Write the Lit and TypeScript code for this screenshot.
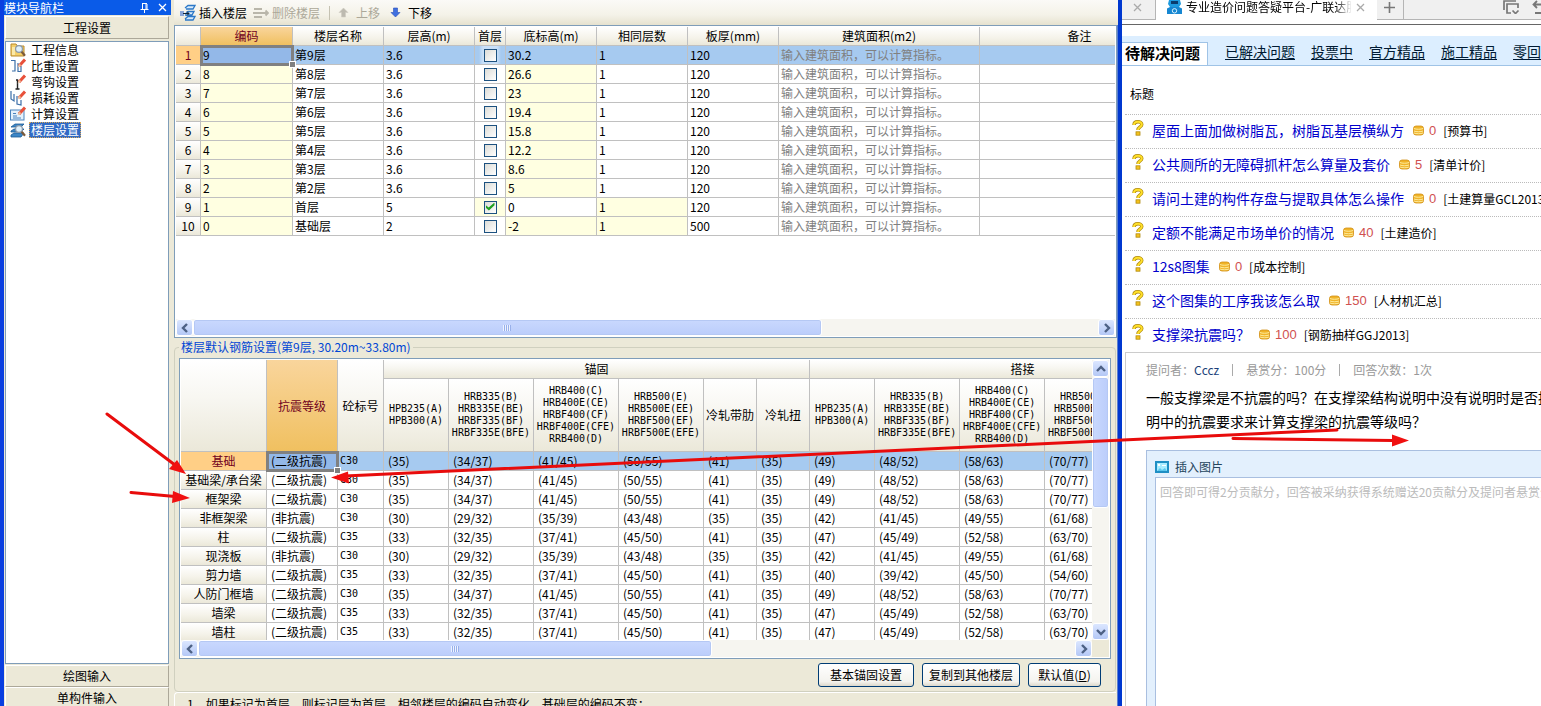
import { LitElement, html, css, svg, nothing } from "lit";
import { customElement } from "lit/decorators.js";
import { classMap } from "lit/directives/class-map.js";

const HINT = "输入建筑面积，可以计算指标。";

interface Floor { code: string; name: string; h: string; first: boolean; base: string; thick: string; }

const FLOORS: Floor[] = [
  { code: "9", name: "第9层", h: "3.6", first: false, base: "30.2", thick: "120" },
  { code: "8", name: "第8层", h: "3.6", first: false, base: "26.6", thick: "120" },
  { code: "7", name: "第7层", h: "3.6", first: false, base: "23", thick: "120" },
  { code: "6", name: "第6层", h: "3.6", first: false, base: "19.4", thick: "120" },
  { code: "5", name: "第5层", h: "3.6", first: false, base: "15.8", thick: "120" },
  { code: "4", name: "第4层", h: "3.6", first: false, base: "12.2", thick: "120" },
  { code: "3", name: "第3层", h: "3.6", first: false, base: "8.6", thick: "120" },
  { code: "2", name: "第2层", h: "3.6", first: false, base: "5", thick: "120" },
  { code: "1", name: "首层", h: "5", first: true, base: "0", thick: "120" },
  { code: "0", name: "基础层", h: "2", first: false, base: "-2", thick: "500" },
];

const FLOOR_COLS = [25, 92, 91, 91, 31, 91, 91, 91, 201, 200];
const FLOOR_HEADS = ["编码", "楼层名称", "层高(m)", "首层", "底标高(m)", "相同层数", "板厚(mm)", "建筑面积(m2)", "备注"];

const G30 = ["(35)", "(34/37)", "(41/45)", "(50/55)", "(41)", "(35)", "(49)", "(48/52)", "(58/63)", "(70/77)"];
const GN = ["(30)", "(29/32)", "(35/39)", "(43/48)", "(35)", "(35)", "(42)", "(41/45)", "(49/55)", "(61/68)"];
const G35 = ["(33)", "(32/35)", "(37/41)", "(45/50)", "(41)", "(35)", "(47)", "(45/49)", "(52/58)", "(63/70)"];
const GW = ["(33)", "(32/35)", "(37/41)", "(45/50)", "(41)", "(35)", "(40)", "(39/42)", "(45/50)", "(54/60)"];

const REBAR: [string, string, string, string[]][] = [
  ["基础", "(二级抗震)", "C30", G30],
  ["基础梁/承台梁", "(二级抗震)", "C30", G30],
  ["框架梁", "(二级抗震)", "C30", G30],
  ["非框架梁", "(非抗震)", "C30", GN],
  ["柱", "(二级抗震)", "C35", G35],
  ["现浇板", "(非抗震)", "C30", GN],
  ["剪力墙", "(二级抗震)", "C35", GW],
  ["人防门框墙", "(二级抗震)", "C30", G30],
  ["墙梁", "(二级抗震)", "C35", G35],
  ["墙柱", "(二级抗震)", "C35", G35],
];

const REBAR_COLS = [86, 71, 46, 65, 85, 85, 85, 53, 53, 65, 85, 85, 85, 53, 53];
const BAR_KINDS: string[][] = [
  ["HPB235(A)", "HPB300(A)"],
  ["HRB335(B)", "HRB335E(BE)", "HRBF335(BF)", "HRBF335E(BFE)"],
  ["HRB400(C)", "HRB400E(CE)", "HRBF400(CF)", "HRBF400E(CFE)", "RRB400(D)"],
  ["HRB500(E)", "HRB500E(EE)", "HRBF500(EF)", "HRBF500E(EFE)"],
];
const KINDS: string[][] = [...BAR_KINDS, ["冷轧带肋"], ["冷轧扭"], ...BAR_KINDS, [], []];

const QUESTIONS: [string, string, string][] = [
  ["屋面上面加做树脂瓦，树脂瓦基层横纵方", "0", "[预算书]"],
  ["公共厕所的无障碍抓杆怎么算量及套价", "5", "[清单计价]"],
  ["请问土建的构件存盘与提取具体怎么操作", "0", "[土建算量GCL2013]"],
  ["定额不能满足市场单价的情况", "40", "[土建造价]"],
  ["12s8图集", "0", "[成本控制]"],
  ["这个图集的工序我该怎么取", "150", "[人材机汇总]"],
  ["支撑梁抗震吗？", "100", "[钢筋抽样GGJ2013]"],
];

const pencil = svg`<path d="M15 1.5 9 8" stroke="#e8503a" stroke-width="3"/><path d="M9.8 5.6 7.4 9.6l3.6-2.2z" fill="#e9c9a0"/>`;
const glass = svg`<circle cx="9" cy="7" r="3.4" fill="#dff0fb" stroke="#8a98a8" stroke-width="1.2"/><path d="m11.6 9.8 3.4 4" stroke="#7b5a3a" stroke-width="2.2"/>`;

const NAV: [string, unknown][] = [
  ["工程信息", svg`<path d="M1 2h5l1.5 2H14v10H1z" fill="#f4cf6a" stroke="#b98a2c"/><path d="M2 5h3v8H2z" fill="#fbe9a8"/>${glass}`],
  ["比重设置", svg`<path d="M1 2.5h4v10.500H2M8 5v8.500h3V8" fill="none" stroke="#3b6ea8" stroke-width="1.2"/>${pencil}`],
  ["弯钩设置", svg`<path d="M5.500 15h4M7.500 15V6H6" fill="none" stroke="#222" stroke-width="1.400"/>${pencil}`],
  ["损耗设置", svg`<path d="M1 1v8l3 2V4M7 6v8l4 1v-5" fill="none" stroke="#3b6ea8" stroke-width="1.200"/>${pencil}`],
  ["计算设置", svg`<rect x=".5" y="4" width="13.500" height="10" fill="#e4f1fb" stroke="#4a83bd"/><path d="M3 7.500h3M3 10h4M3 12h8" stroke="#4a83bd"/>${pencil}`],
  ["楼层设置", svg`<path d="m1 5 4-3h9l-3 3zM1 9l3-2h10l-3 3H1zM1 13l3-2h10l-3 4H1z" fill="#3d86c6" stroke="#1c5a94" stroke-width=".8"/>${glass}`],
];

@customElement("scroll-bar")
export class ScrollBar extends LitElement {
  static properties = { vertical: { type: Boolean, reflect: true }, thumb: { type: Number }, rest: { type: Number } };
  declare vertical: boolean;
  declare thumb: number;
  declare rest: number;

  static styles = css`
    :host { display: flex; width: 100%; height: 17px; background: #f6f5f0; }
    :host([vertical]) { flex-direction: column; width: 17px; height: 100%; }
    .arrow { flex: 0 0 17px; height: 17px; width: 17px; padding: 0; border: 1px solid #fff; border-radius: 3px; background: linear-gradient(#dbe6ff, #b4c8f6); display: grid; place-items: center; }
    .track { flex: 1; display: flex; min-width: 0; min-height: 0; }
    :host([vertical]) .track { flex-direction: column; }
    .thumb { border: 1px solid #fff; border-radius: 3px; box-shadow: inset 0 0 0 1px #b5c8f4; background: linear-gradient(#c9d8fe, #bbcdfb); display: grid; place-items: center; }
    .grip { width: 8px; height: 6px; background: repeating-linear-gradient(90deg, #eef3ff 0 1px, #98b0ea 1px 2px); }
    :host([vertical]) .thumb { background: linear-gradient(90deg, #c9d8fe, #bbcdfb); }
    :host([vertical]) .grip { display: none; }
    svg { display: block; }
  `;

  render() {
    const a = this.vertical ? "m1 7 4-4 4 4" : "M7 1 3 5l4 4";
    const b = this.vertical ? "m1 3 4 4 4-4" : "m3 1 4 4-4 4";
    const arrow = (d: string) => html`<svg width="10" height="10" viewBox="0 0 10 10"><path d=${d} fill="none" stroke="#4d6185" stroke-width="2.400"/></svg>`;
    return html`
      <button class="arrow" aria-label="向前滚动">${arrow(a)}</button>
      <div class="track">
        <div class="thumb" style="flex:${this.thumb} 1 0"><div class="grip"></div></div>
        <div style="flex:${this.rest} 1 0"></div>
      </div>
      <button class="arrow" aria-label="向后滚动">${arrow(b)}</button>`;
  }
}

@customElement("app-root")
export class AppRoot extends LitElement {
  static styles = css`
    :host {
      display: block; position: relative; height: 100vh; overflow: hidden; color: #000; background: #fff;
      font: 12px/16px "Noto Sans CJK SC", "Liberation Sans", sans-serif;
    }
    * { box-sizing: border-box; }
    button { font: inherit; color: inherit; margin: 0; padding: 0; cursor: default; }
    svg { display: block; flex: none; }
    .desktop { display: grid; grid-template-columns: minmax(0, 1122fr) minmax(0, 419fr); height: 100%; }
    .app { display: grid; grid-template-columns: 170px minmax(0, 1fr); background: #ece9d8; border-left: 4px solid #0a3fe0; border-right: 4px solid #0038d0; box-shadow: inset -1px 0 #5c7fd0; overflow: hidden; }

    /* navigation column */
    .side { display: flex; flex-direction: column; min-height: 0; padding-right: 4px; gap: 1px; }
    .cap { display: flex; align-items: center; height: 15px; margin-right: -1px; color: #fff; background: #0a5be8; }
    .cap span { flex: 1; }
    .cap button { border: 0; background: none; width: 18px; height: 15px; display: grid; place-items: center; }
    .bar { flex: none; height: 22px; margin: 0 1px; border: 1px solid #fff; border-bottom-color: #aca899; border-right-color: #aca899; background: #ece9d8; }
    .bar.top { height: 23px; margin-bottom: 1px; }
    .tree { flex: 1; margin: 0 1px; background: #fff; border: 1px solid #7f9db9; list-style: none; padding: 0 4px; }
    .bars { display: flex; flex-direction: column; flex: none; height: 41px; overflow: hidden; }
    .tree li { display: flex; align-items: center; gap: 3px; height: 16px; }
    .tree button { border: 1px solid transparent; background: none; line-height: 14px; height: 16px; padding: 0 1px; }
    .tree .on { background: #316ac5; color: #fff; border: 1px dotted #d8a85a; }

    /* work area */
    .work { display: flex; flex-direction: column; min-width: 0; min-height: 0; }
    .tools { display: flex; align-items: center; gap: 4px; height: 25px; flex: none; padding: 0 5px; background: linear-gradient(#fbfaf7, #f4f2e8 60%, #e6e2cf); }
    .tools button { display: flex; align-items: center; gap: 3px; border: 0; background: none; height: 20px; padding: 0 1px; }
    .tools button:disabled { color: #aca899; }
    .tools .move { gap: 7px; padding: 0 3px; }
    .tools i { width: 1px; height: 14px; background: #c5c2b2; margin: 0 1px 0 4px; }
    .panel { border: 1px solid #7f9db9; background: #fff; display: flex; flex-direction: column; padding: 1px; }
    .floors { height: 313px; flex: none; margin-right: 1px; }
    .clip { flex: 1; overflow: hidden; min-width: 0; min-height: 0; }
    table { border-collapse: separate; border-spacing: 0; table-layout: fixed; width: 0; }
    td, th { height: 19px; line-height: 16px; padding: 0 0 0 2px; border: 0 solid #c0c0c0; border-width: 0 1px 1px 0; font-weight: 400; white-space: nowrap; text-align: left; overflow: hidden; }
    th { padding: 0; text-align: center; background: linear-gradient(#fff, #f5f3ea 60%, #ebe8d9); }
    tr.sel td { background: #a6caf0; }
    td.y { background: #ffffe1; }
    th.hot { background: linear-gradient(#f9d59c, #f0c060); color: #700020; }
    tbody th.hot { background: #ffcf86; }
    td.tick { padding: 0; text-align: center; }
    tr.sel td.tick { background: linear-gradient(90deg, #a6caf0 4px, #c9e0f8 8px, #c9e0f8 22px, #a6caf0 26px); }
    td.ghost { color: #808080; }
    tr td.cur, tr.sel td.cur { background: #93b8e8; position: relative; overflow: visible; outline: 3px solid #808080; outline-offset: -2px; }
    .cur::after { content: ""; position: absolute; right: -4px; bottom: -4px; width: 5px; height: 5px; background: #808080; border: 1px solid #fff; }
    input[type="checkbox"] { appearance: none; display: block; width: 13px; height: 13px; margin: 0 auto; border: 1px solid #1c5180; background: linear-gradient(135deg, #dcdcd7, #fff); }
    input[type="checkbox"]:checked::after { content: ""; display: block; width: 9px; height: 8px; margin: 1px; background: #21a121; clip-path: polygon(0 30%, 35% 62%, 100% 0, 100% 35%, 38% 100%, 0 62%); }

    fieldset { margin: 0 2px 0 0; min-width: 0; border: 1px solid #d0d0bf; border-radius: 4px; padding: 2px 4px 4px 4px; }
    legend { color: #0046d5; line-height: 18px; padding: 0 2px; margin-left: 0; }
    .rebar { height: 301px; }
    .with-v { display: flex; flex: 1; min-height: 0; }
    .h-row { padding-right: 17px; background: #ece9d8; }
    .kind { height: 73px; }
    .kind.latin { font: 10px/12px "DejaVu Sans Mono", monospace; }
    .grade { font: 10px/18px "DejaVu Sans Mono", monospace; }
    .rebar td.lv, .rebar td.v { padding-left: 4px; }
    .rebar thead th { background: linear-gradient(#fff, #f8f7f2 40%, #ebe8d9); }
    .rebar thead th.hot { background: linear-gradient(#f9d59c, #f0c060); }
    .acts { display: flex; justify-content: flex-end; gap: 8px; padding: 4px 10px 0 0; }
    .acts button { height: 24px; padding: 0 11px; line-height: 20px; border: 1px solid #003c74; border-radius: 3px; background: linear-gradient(#fff, #f4f3ee 80%, #dcd8cb); min-width: 73px; }
    .acts button.mid { padding: 0 6px; }
    .note { flex: 1; margin: 0 2px 0 0; border: 1px solid #fff; border-width: 1px 0 0 1px; border-radius: 4px 0 0 0; padding: 3px 12px; white-space: nowrap; overflow: hidden; }

    /* browser */
    .web { display: flex; flex-direction: column; min-width: 0; overflow: hidden; background: #fff; font-size: 14px; line-height: 20px; }
    .tabs { display: flex; height: 25px; flex: none; border-bottom: 1px solid #666; font-size: 12px; line-height: 14px; }
    .tabs > * { height: 20px; display: flex; align-items: flex-start; }
    .tabs button { border: 0; background: none; height: 14px; display: grid; place-items: center; }
    .dull { background: #f0f0f0; border: 1px solid #b5b5b5; border-width: 0 1px 1px 0; }
    .dull.gone { width: 34px; padding-left: 11px; }
    .live { width: 221px; padding: 0 0 0 11px; gap: 4px; }
    .live span { flex: 0 1 166px; white-space: nowrap; overflow: hidden; mask-image: linear-gradient(90deg, #000 90%, transparent); }
    .live button { width: 9px; }
    .dull.plus { width: 27px; padding-left: 7px; }
    .dull.tail { flex: 1; justify-content: flex-end; gap: 12px; border-right: 0; margin-right: -4px; }
    .cats { display: flex; align-items: flex-end; height: 30px; flex: none; margin-top: 11px; background: #dceeff; border-bottom: 1px solid #9fc3e6; gap: 16px; overflow: hidden; white-space: nowrap; }
    .cats a { color: #001a33; flex: none; padding-bottom: 5px; line-height: 18px; text-underline-offset: 2px; }
    .cats .now { font-size: 15px; font-weight: 700; color: #000; text-decoration: none; background: #fff; border: 1px solid #9fc3e6; border-width: 1px 1px 0 0; padding: 0 7px 0 3px; height: 23px; line-height: 19px; margin-right: 1px; }
    .sub { font-size: 12px; line-height: 20px; padding: 18px 8px 10px; margin: 0; font-weight: 400; }
    .list { list-style: none; margin: 0 0 0 3px; padding: 0; }
    .list li { display: flex; align-items: center; height: 34px; border-top: 1px dotted #bbb; padding: 0 0 2px 7px; white-space: nowrap; overflow: hidden; }
    .list .q { margin: -5px 8px 0 0; }
    .list a { color: #0000cc; text-decoration: none; margin-right: 9px; line-height: 18px; padding-bottom: 1px; }
    .list b { font: 13px/16px "Liberation Sans", sans-serif; color: #d05050; margin: 0 7px 0 5px; }
    .list span { font-size: 12px; }
    .card { flex: 1; display: flex; flex-direction: column; min-height: 0; margin-left: 3px; border: 1px solid #ccc; border-width: 1px 0 0 1px; padding: 8px 0 0 20px; }
    .meta { display: flex; font-size: 12px; line-height: 18px; color: #999; white-space: nowrap; }
    .meta a { color: #1a3f7a; text-decoration: none; }
    .meta i { width: 1px; height: 12px; margin: 3px 13px; background: #aaa; }
    .ask { margin: 6px 0 0; line-height: 24px; white-space: nowrap; }
    .editor { flex: 1; display: flex; flex-direction: column; min-height: 0; margin-top: 17px; border: 1px solid #a9bfe0; border-width: 1px 0 0 1px; background: #e3f0fd; padding: 0 0 0 8px; }
    .editor .pic { display: flex; align-items: center; gap: 6px; height: 26px; padding: 6px 0 0; border: 0; background: none; font-size: 12px; line-height: 18px; color: #24445c; align-self: flex-start; }
    textarea { flex: 1; width: 100%; margin: 0; border: 1px solid #a9bfe0; border-width: 1px 0 0 1px; border-radius: 0; padding: 5px 4px; resize: none; overflow: hidden; white-space: nowrap; background: #fff; outline: 0; font: 12px/18px "Noto Sans CJK SC", sans-serif; }
    textarea::placeholder { color: #bbb; }
    .marks { position: absolute; left: 0; top: 0; pointer-events: none; }
  `;

  private floorTable() {
    return html`<table>
      <colgroup>${FLOOR_COLS.map((w) => html`<col style="width:${w}px">`)}</colgroup>
      <thead><tr><th></th>${FLOOR_HEADS.map((h, i) => html`<th class=${classMap({ hot: i === 0 })} scope="col">${h}</th>`)}</tr></thead>
      <tbody>${FLOORS.map((f, i) => html`<tr class=${classMap({ sel: i === 0 })}>
        <th class=${classMap({ hot: i === 0 })} scope="row">${i + 1}</th>
        <td class=${i === 0 ? "cur" : "y"}>${f.code}</td>
        <td>${f.name}</td>
        <td>${f.h}</td>
        <td class=${classMap({ tick: true, y: f.first })}><input type="checkbox" aria-label="${f.name} 首层" .checked=${f.first}></td>
        <td class=${classMap({ y: !f.first })}>${f.base}</td>
        <td class=${classMap({ y: i > 7 })}>1</td>
        <td>${f.thick}</td>
        <td class="ghost">${HINT}</td>
        <td></td>
      </tr>`)}</tbody>
    </table>`;
  }

  private kindHead(lines: string[]) {
    return html`<th class=${classMap({ kind: true, latin: lines.length > 1 })} scope="col">${lines.map((l, i) => html`${i ? html`<br>` : nothing}${l}`)}</th>`;
  }

  private rebarTable() {
    return html`<table>
      <colgroup>${REBAR_COLS.map((w) => html`<col style="width:${w}px">`)}</colgroup>
      <thead>
        <tr><th rowspan="2"></th><th rowspan="2" class="hot" scope="col">抗震等级</th><th rowspan="2" scope="col">砼标号</th>
          <th colspan="6" scope="colgroup">锚固</th><th colspan="6" scope="colgroup">搭接</th></tr>
        <tr>${KINDS.map((k) => this.kindHead(k))}</tr>
      </thead>
      <tbody>${REBAR.map(([name, level, grade, vals], i) => html`<tr class=${classMap({ sel: i === 0 })}>
        <th class=${classMap({ hot: i === 0 })} scope="row">${name}</th>
        <td class=${classMap({ lv: true, cur: i === 0 })}>${level}</td>
        <td class="grade">${grade}</td>
        ${vals.map((v) => html`<td class="v">${v}</td>`)}<td></td><td></td>
      </tr>`)}</tbody>
    </table>`;
  }

  private cross(color: string) {
    return html`<svg width="9" height="9" viewBox="0 0 9 9"><path d="m1 1 7 7M8 1 1 8" stroke=${color} stroke-width="1.300"/></svg>`;
  }

  private arrow(up: boolean) {
    return html`<svg width="11" height="11" viewBox="0 0 11 11"><path d=${up ? "M5.500 1 10 5.500H7.500V10h-4V5.500H1z" : "M5.500 10 1 5.500h2.500V1h4v4.500H10z"} fill=${up ? "#bdbab0" : "#3f6fe0"} stroke=${up ? "#d0cdc3" : "#2a4fb8"} stroke-width=".6"/></svg>`;
  }

  render() {
    return html`
      <div class="desktop">
        <div class="app">
          <nav class="side" aria-label="模块导航栏">
            <div class="cap"><span>模块导航栏</span>
              <button aria-label="固定"><svg width="9" height="10" viewBox="0 0 9 10"><path d="M2 .5h5M2.500 1v5M6 1v5M7 1v5M.5 6.500h8M4.500 7v3" stroke="#fff" fill="none"/></svg></button>
              <button aria-label="关闭">${this.cross("#fff")}</button>
            </div>
            <button class="bar top">工程设置</button>
            <ul class="tree">
              ${NAV.map(([t, icon], i) => html`<li><svg width="16" height="16" viewBox="0 0 16 16">${icon}</svg><button class=${classMap({ on: i === 5 })}>${t}</button></li>`)}
            </ul>
            <div class="bars"><button class="bar">绘图输入</button><button class="bar">单构件输入</button></div>
          </nav>

          <main class="work">
            <div class="tools">
              <button><svg width="16" height="18" viewBox="0 0 16 18"><path d="m5 4 3-2.500h7L13 5H6M6 9.500l2-2h6l-2 3.500H5M5 15l3-2.500h7L13 16H5" fill="#d8ebfb" stroke="#2c78c8" stroke-width="1.300"/><path d="M0 7h4v5H0z" fill="#8aa6d8"/><path d="M3 9.500h6M7 7.500l2 2-2 2" stroke="#123" fill="none"/></svg>插入楼层</button>
              <button disabled><svg width="16" height="14" viewBox="0 0 16 14"><path d="M1 3h8M0 7h15M1 11h8M12.500 4.500 15 7l-2.500 2.500" stroke="#b9b6aa" stroke-width="1.800" fill="none"/></svg>删除楼层</button>
              <i></i>
              <button class="move" disabled>${this.arrow(true)}上移</button>
              <button class="move">${this.arrow(false)}下移</button>
            </div>
            <section class="panel floors">
              <div class="clip">${this.floorTable()}</div>
              <scroll-bar .thumb=${628} .rest=${277}></scroll-bar>
            </section>
            <fieldset>
              <legend>楼层默认钢筋设置(第9层, 30.20m~33.80m)</legend>
              <div class="panel rebar">
                <div class="with-v">
                  <div class="clip">${this.rebarTable()}</div>
                  <div><scroll-bar vertical .thumb=${130} .rest=${116}></scroll-bar></div>
                </div>
                <div class="h-row"><scroll-bar .thumb=${514} .rest=${365}></scroll-bar></div>
              </div>
              <div class="acts">
                <button>基本锚固设置</button><button class="mid">复制到其他楼层</button><button class="mid">默认值(<u>D</u>)</button>
              </div>
            </fieldset>
            <div class="note">1、如果标记为首层，则标记层为首层，相邻楼层的编码自动变化，基础层的编码不变；</div>
          </main>
        </div>

        <section class="web">
          <div class="tabs">
            <div class="dull gone"><button aria-label="关闭标签">${this.cross("#aaa")}</button></div>
            <div class="live">
              <svg width="15" height="14" viewBox="0 0 15 14"><path d="M2 0h11l1 4-2 3H3L1 4z" fill="#1e9ade"/><path d="M4 1h7v3H4z" fill="#0a3d6e"/><path d="M0 8.500 3 7h9l3 1.500V14H0z" fill="#1687d2"/><circle cx="7.500" cy="10.800" r="2.200" fill="none" stroke="#d9f3ff"/></svg>
              <span>专业造价问题答疑平台-广联达服</span>
              <button aria-label="关闭标签">${this.cross("#aaa")}</button>
            </div>
            <div class="dull plus"><button aria-label="新标签"><svg width="11" height="11" viewBox="0 0 11 11"><path d="M5.500 0v11M0 5.500h11" stroke="#777" stroke-width="1.600"/></svg></button></div>
            <div class="dull tail">
              <button aria-label="标签列表"><svg width="17" height="14" viewBox="0 0 17 14"><path d="M1 10V1h12M8 13H4V4h11v4M9.500 10.500l3 3 3-3" fill="none" stroke="#777" stroke-width="1.700"/></svg></button>
              <button aria-label="撤销关闭"><svg width="13" height="14" viewBox="0 0 13 14"><path d="M5 1 1.500 4.500 5 8M2 4.500h7a4 4 0 0 1 0 8.500H3" fill="none" stroke="#777" stroke-width="1.800"/></svg></button>
            </div>
          </div>
          <nav class="cats"><a class="now" href="#">待解决问题</a><a href="#">已解决问题</a><a href="#">投票中</a><a href="#">官方精品</a><a href="#">施工精品</a><a href="#">零回答</a></nav>
          <h2 class="sub">标题</h2>
          <ul class="list">
            ${QUESTIONS.map(([t, n, tag]) => html`<li>
              <svg class="q" width="12" height="16" viewBox="0 0 12 16"><path d="M2 5C2 .8 9.800.8 9.800 4.500 9.800 7 6 7 6 10" fill="none" stroke="#b08a10" stroke-width="3.400"/><path d="M2 5C2 .8 9.800.8 9.800 4.500 9.800 7 6 7 6 10" fill="none" stroke="#ffe02a" stroke-width="2"/><rect x="4" y="11.800" width="4" height="3.400" fill="#f5c21c" stroke="#b08a10" stroke-width=".8"/></svg>
              <a href="#">${t}</a>
              <svg width="11" height="11" viewBox="0 0 11 11"><rect x=".5" y="1" width="10" height="9" rx="2.500" fill="#f0b429" stroke="#d28f14" stroke-width=".8"/><path d="M1 3.500c2 1 7 1 9 0M1 6c2 1 7 1 9 0M1 8c2 1 7 1 9 0" fill="none" stroke="#fff0a8" stroke-width=".9"/></svg>
              <b>${n}</b><span>${tag}</span></li>`)}
          </ul>
          <article class="card">
            <div class="meta"><span>提问者：<a href="#">Cccz</a></span><i></i><span>悬赏分：100分</span><i></i><span>回答次数：1次</span></div>
            <p class="ask">一般支撑梁是不抗震的吗？在支撑梁结构说明中没有说明时是否按说<br>明中的抗震要求来计算支撑梁的抗震等级吗？</p>
            <div class="editor">
              <button class="pic"><svg width="14" height="12" viewBox="0 0 14 12"><rect x="1" y="1" width="12" height="10" fill="#a8ecff" stroke="#1f8fc4" stroke-width="2"/><path d="M3 3h2v2H3zM7 4h4v1H7z" fill="#fff"/><path d="m2 10 3-3 2 2 3-2 2 3z" fill="#5cc8ee"/></svg>插入图片</button>
              <textarea aria-label="回答" placeholder="回答即可得2分贡献分，回答被采纳获得系统赠送20贡献分及提问者悬赏分"></textarea>
            </div>
          </article>
        </section>
      </div>
      <svg class="marks" width="1541" height="706" viewBox="0 0 1541 706" aria-hidden="true">
        <g stroke="#e80c0c" stroke-width="3" stroke-linecap="round">
          <path d="M107 414 175 465M131 492.500l44 4M1337 430 345 476M1233 438.500l160 2"/>
        </g>
        <g fill="#f01010">
          <path d="m186 474-17-5 8-9zM190 498l-18 5 1-12zM331 477.500l17-6 1 12zM1409 440.500l-17 6v-12z"/>
        </g>
      </svg>`;
  }
}
